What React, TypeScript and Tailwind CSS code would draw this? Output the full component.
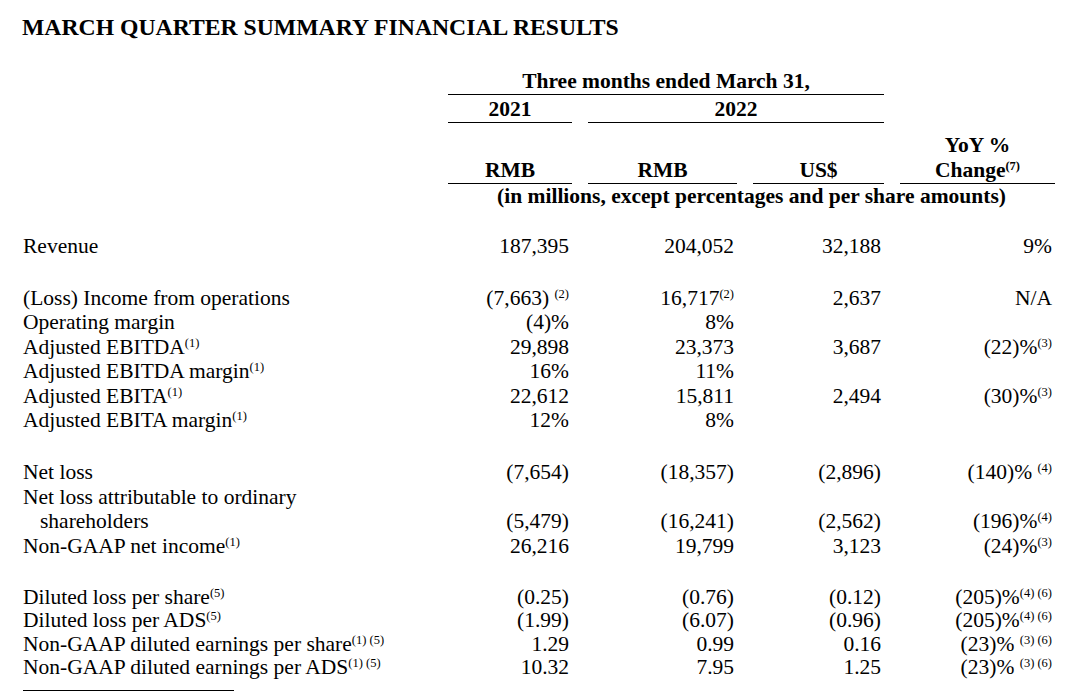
import type { ReactNode } from "react";

const cols = "grid grid-cols-[409px_124px_149px_131px_155px] gap-x-4";

function Sup({ children }: { children: ReactNode }) {
  return (
    <sup className="relative -top-[0.55em] align-baseline text-[12.5px] leading-none">
      {children}
    </sup>
  );
}

type Row = { label: ReactNode; vals?: ReactNode[]; indent?: boolean };

const groups: Row[][] = [
  [{ label: "Revenue", vals: ["187,395", "204,052", "32,188", "9%"] }],
  [
    {
      label: "(Loss) Income from operations",
      vals: [
        <>(7,663) <Sup>(2)</Sup></>,
        <>16,717<Sup>(2)</Sup></>,
        "2,637",
        "N/A",
      ],
    },
    { label: "Operating margin", vals: ["(4)%", "8%", "", ""] },
    {
      label: <>Adjusted EBITDA<Sup>(1)</Sup></>,
      vals: ["29,898", "23,373", "3,687", <>(22)%<Sup>(3)</Sup></>],
    },
    { label: <>Adjusted EBITDA margin<Sup>(1)</Sup></>, vals: ["16%", "11%", "", ""] },
    {
      label: <>Adjusted EBITA<Sup>(1)</Sup></>,
      vals: ["22,612", "15,811", "2,494", <>(30)%<Sup>(3)</Sup></>],
    },
    { label: <>Adjusted EBITA margin<Sup>(1)</Sup></>, vals: ["12%", "8%", "", ""] },
  ],
  [
    {
      label: "Net loss",
      vals: ["(7,654)", "(18,357)", "(2,896)", <>(140)% <Sup>(4)</Sup></>],
    },
    { label: "Net loss attributable to ordinary" },
    {
      label: "shareholders",
      indent: true,
      vals: ["(5,479)", "(16,241)", "(2,562)", <>(196)%<Sup>(4)</Sup></>],
    },
    {
      label: <>Non-GAAP net income<Sup>(1)</Sup></>,
      vals: ["26,216", "19,799", "3,123", <>(24)%<Sup>(3)</Sup></>],
    },
  ],
  [
    {
      label: <>Diluted loss per share<Sup>(5)</Sup></>,
      vals: ["(0.25)", "(0.76)", "(0.12)", <>(205)%<Sup>(4) (6)</Sup></>],
    },
    {
      label: <>Diluted loss per ADS<Sup>(5)</Sup></>,
      vals: ["(1.99)", "(6.07)", "(0.96)", <>(205)%<Sup>(4) (6)</Sup></>],
    },
    {
      label: <>Non-GAAP diluted earnings per share<Sup>(1) (5)</Sup></>,
      vals: ["1.29", "0.99", "0.16", <>(23)% <Sup>(3) (6)</Sup></>],
    },
    {
      label: <>Non-GAAP diluted earnings per ADS<Sup>(1) (5)</Sup></>,
      vals: ["10.32", "7.95", "1.25", <>(23)% <Sup>(3) (6)</Sup></>],
    },
  ],
];

export default function App() {
  return (
    <div className="w-[1080px] h-[696px] overflow-hidden bg-white pl-[23px] pt-[13px] text-black font-['Liberation_Serif','Times_New_Roman',serif] text-[21.5px]">
      <h1 className="-ml-px text-[23.7px] font-bold leading-[28px]">
        MARCH QUARTER SUMMARY FINANCIAL RESULTS
      </h1>

      {/* column headers */}
      <div className="mt-[26.5px] font-bold">
        <div className={cols}>
          <div className="col-start-2 col-span-3 border-b border-black text-center leading-[26px]">
            Three months ended March 31,
          </div>
        </div>
        <div className={`${cols} mt-px`}>
          <div className="col-start-2 border-b border-black text-center leading-[26px]">2021</div>
          <div className="col-span-2 border-b border-black text-center leading-[26px]">2022</div>
        </div>
        <div className={`${cols} mt-[10px]`}>
          <div className="col-start-5 text-center leading-[24px]">YoY %</div>
        </div>
        <div className={cols}>
          <div className="col-start-2 border-b border-black text-center leading-[26px]">RMB</div>
          <div className="border-b border-black text-center leading-[26px]">RMB</div>
          <div className="border-b border-black text-center leading-[26px]">US$</div>
          <div className="border-b border-black text-center leading-[26px]">
            Change<Sup>(7)</Sup>
          </div>
        </div>
        <div className={cols}>
          <div className="col-start-2 col-span-4 text-center leading-[25px]">
            (in millions, except percentages and per share amounts)
          </div>
        </div>
      </div>

      {/* body */}
      <div className="mt-[25px] flex flex-col gap-[27.5px]">
        {groups.map((rows, gi) => (
          <div key={gi}>
            {rows.map((r, i) => (
              <div
                key={i}
                className={`${cols} whitespace-nowrap ${
                  gi === 3 ? "h-[23.5px] leading-[23.5px]" : "h-[24.5px] leading-[24.5px]"
                }`}
              >
                <div className={r.indent ? "pl-[17px]" : ""}>{r.label}</div>
                {(r.vals ?? ["", "", "", ""]).map((v, j) => (
                  <div key={j} className="pr-[3px] text-right">
                    {v}
                  </div>
                ))}
              </div>
            ))}
          </div>
        ))}
      </div>

      <div className="mt-[10px] w-[211px] border-b border-black" />
    </div>
  );
}
